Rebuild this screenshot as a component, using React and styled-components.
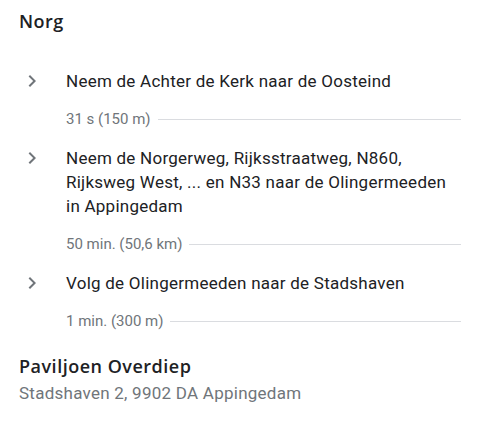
import styled, { createGlobalStyle } from 'styled-components'

const GlobalStyle = createGlobalStyle`
  body {
    margin: 0;
    background: #fff;
    font-family: Roboto, "Liberation Sans", sans-serif;
    -webkit-font-smoothing: antialiased;
  }
`

const steps = [
  { text: 'Neem de Achter de Kerk naar de Oosteind', distance: '31 s (150 m)' },
  {
    text: 'Neem de Norgerweg, Rijksstraatweg, N860, Rijksweg West, ... en N33 naar de Olingermeeden in Appingedam',
    distance: '50 min. (50,6 km)',
  },
  { text: 'Volg de Olingermeeden naar de Stadshaven', distance: '1 min. (300 m)' },
]

const Panel = styled.div`
  width: 479px;
  padding: 9px 18px 0 19px;
  box-sizing: border-box;
`

const PlaceTitle = styled.h2`
  margin: 0;
  font-family: "Open Sans", Roboto, sans-serif;
  font-weight: 600;
  font-size: 18px;
  letter-spacing: 0.5px;
  line-height: 24px;
  color: #202124;
`

const StepList = styled.ol`
  list-style: none;
  margin: 36px 0 0;
  padding: 0;
  display: flex;
  flex-direction: column;
  gap: 17px;
`

const Step = styled.li`
  display: flex;
  flex-direction: column;
  gap: 16px;
`

const Instruction = styled.div`
  display: grid;
  grid-template-columns: 24px 1fr;
  column-gap: 22px;
  padding-left: 1px;
  font-size: 17px;
  letter-spacing: 0.25px;
  line-height: 24px;
  color: #202124;
`

const Chevron = styled.svg`
  width: 24px;
  height: 24px;
  fill: #70757a;
`

const Distance = styled.div`
  display: flex;
  align-items: center;
  gap: 7px;
  padding-left: 47px;
  font-size: 15px;
  line-height: 20px;
  color: #70757a;

  &::after {
    content: '';
    flex: 1;
    height: 1px;
    background: #dadce0;
  }
`

const Destination = styled.div`
  margin-top: 23px;
`

const Address = styled.div`
  margin-top: 3px;
  font-size: 17px;
  letter-spacing: 0.25px;
  line-height: 24px;
  color: #70757a;
`

export default function App() {
  return (
    <>
      <GlobalStyle />
      <Panel>
        <PlaceTitle>Norg</PlaceTitle>
        <StepList>
          {steps.map((step) => (
            <Step key={step.text}>
              <Instruction>
                <Chevron viewBox="0 0 24 24">
                  <path d="M10 6L8.59 7.41 13.17 12l-4.58 4.59L10 18l6-6z" />
                </Chevron>
                <span>{step.text}</span>
              </Instruction>
              <Distance>{step.distance}</Distance>
            </Step>
          ))}
        </StepList>
        <Destination>
          <PlaceTitle>Paviljoen Overdiep</PlaceTitle>
          <Address>Stadshaven 2, 9902 DA Appingedam</Address>
        </Destination>
      </Panel>
    </>
  )
}
